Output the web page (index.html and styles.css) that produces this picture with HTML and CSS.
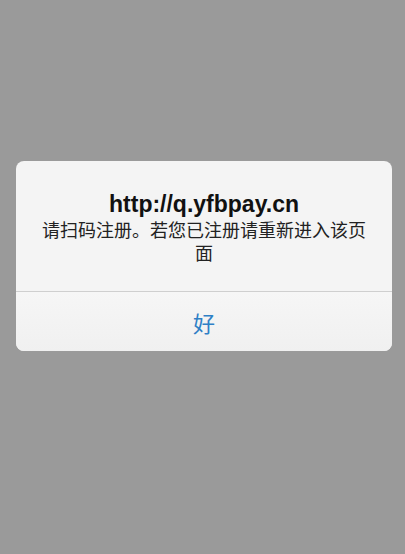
FILE: index.html
```html
<!DOCTYPE html>
<html lang="zh-CN">
<head>
<meta charset="utf-8">
<title>提示</title>
<link rel="stylesheet" href="styles.css">
</head>
<body>
<div class="screen">
  <div class="alert">
    <div class="alert-content">
      <div class="alert-title">http://q.yfbpay.cn</div>
      <div class="alert-message">请扫码注册。若您已注册请重新进入该页面</div>
    </div>
    <div class="alert-actions">
      <button class="alert-button">好</button>
    </div>
  </div>
</div>
</body>
</html>
```
FILE: styles.css
```css
html, body {
  margin: 0;
  padding: 0;
  height: 100%;
  background: #9a9a9a;
}
.screen {
  padding: 161px 13px 0 16px;
  font-family: "Liberation Sans", "Noto Sans CJK SC", sans-serif;
}
.alert {
  background: #f4f4f4;
  border-radius: 8px;
  overflow: hidden;
}
.alert-content {
  padding: 29px 18px 27px;
  text-align: center;
}
.alert-title {
  font-size: 23px;
  font-weight: bold;
  line-height: 28px;
  color: #111;
}
.alert-message {
  font-family: "Noto Sans CJK SC", sans-serif;
  font-size: 18px;
  line-height: 23px;
  color: #222;
}
.alert-actions {
  border-top: 1px solid #cfcfcf;
  display: flex;
  background: linear-gradient(#f6f6f6, #f0f0f0);
}
.alert-button {
  flex: 1;
  height: 59px;
  border: 0;
  background: transparent;
  font-family: "Noto Sans CJK SC", sans-serif;
  font-size: 22px;
  color: #2f80c6;
  padding: 0;
  margin: 0;
}
```
